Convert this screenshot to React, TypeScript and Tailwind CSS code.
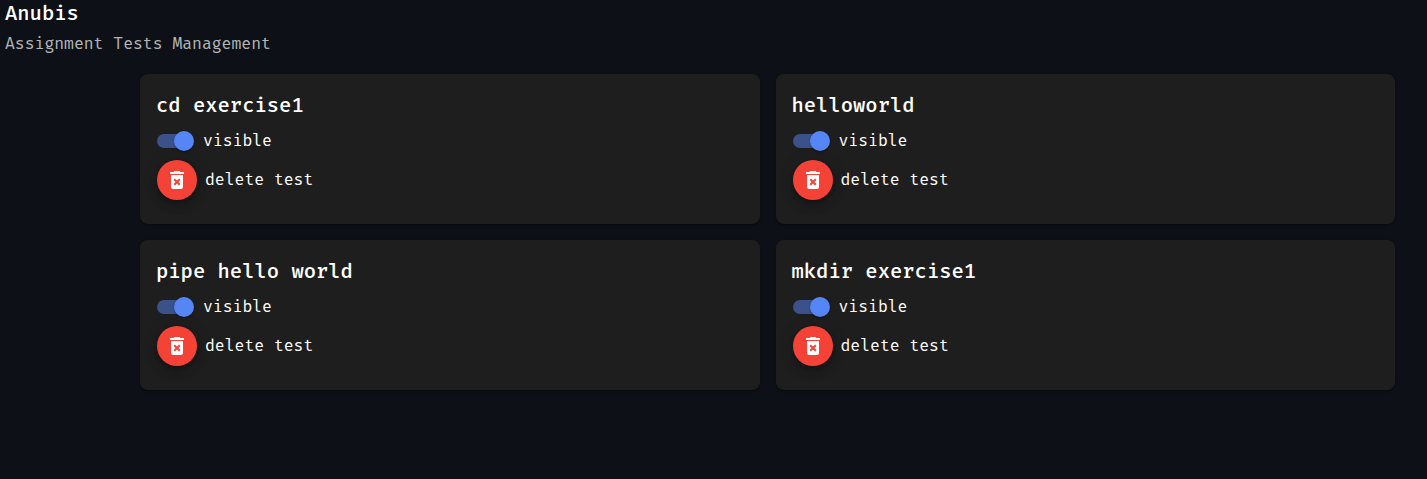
import { useState } from "react";
import { MdDeleteForever } from "react-icons/md";

const tests = ["cd exercise1", "helloworld", "pipe hello world", "mkdir exercise1"];

function Switch() {
  const [on, setOn] = useState(true);
  return (
    <button
      type="button"
      role="switch"
      aria-checked={on}
      aria-label="visible"
      onClick={() => setOn(!on)}
      className={`flex h-3.5 w-[34px] items-center rounded-full bg-[#3a5289] ${on ? "pl-[17px]" : ""}`}
    >
      <span className="size-5 shrink-0 rounded-full bg-[#5686f5] shadow-[0_2px_1px_-1px_rgba(0,0,0,0.2),0_1px_1px_0_rgba(0,0,0,0.14),0_1px_3px_0_rgba(0,0,0,0.12)]" />
    </button>
  );
}

function TestCard({ name }: { name: string }) {
  return (
    <section className="h-[150px] rounded-lg bg-[#1e1e1e] px-4 pt-4 shadow-[0_2px_1px_-1px_rgba(0,0,0,0.2),0_1px_1px_0_rgba(0,0,0,0.14),0_1px_3px_0_rgba(0,0,0,0.12)]">
      <h2 className="text-[20px] leading-8 font-medium">{name}</h2>
      <div className="flex h-[38px] items-center gap-3 pl-px">
        <Switch />
        <span className="-mt-px leading-6">visible</span>
      </div>
      <div className="flex h-10 items-center gap-2 pl-px">
        <button
          type="button"
          aria-label="delete test"
          className="flex size-10 items-center justify-center rounded-full bg-[#f44336] shadow-[0_3px_5px_-1px_rgba(0,0,0,0.2),0_6px_10px_0_rgba(0,0,0,0.14),0_1px_18px_0_rgba(0,0,0,0.12)]"
        >
          <MdDeleteForever className="size-6" />
        </button>
        <span className="leading-6">delete test</span>
      </div>
    </section>
  );
}

export default function App() {
  return (
    <main className="flex min-h-screen flex-col bg-[#0d1117] font-['Fira_Code','DejaVu_Sans_Mono',monospace] text-[16px] text-white">
      <header className="pl-[5px]">
        <h1 className="-mt-0.5 text-[20px] leading-8 font-medium">Anubis</h1>
        <p className="leading-7 text-white/70">Assignment Tests Management</p>
      </header>
      <div className="mt-4 grid grid-cols-2 gap-4 pr-8 pl-[140px]">
        {tests.map((name) => (
          <TestCard key={name} name={name} />
        ))}
      </div>
    </main>
  );
}
